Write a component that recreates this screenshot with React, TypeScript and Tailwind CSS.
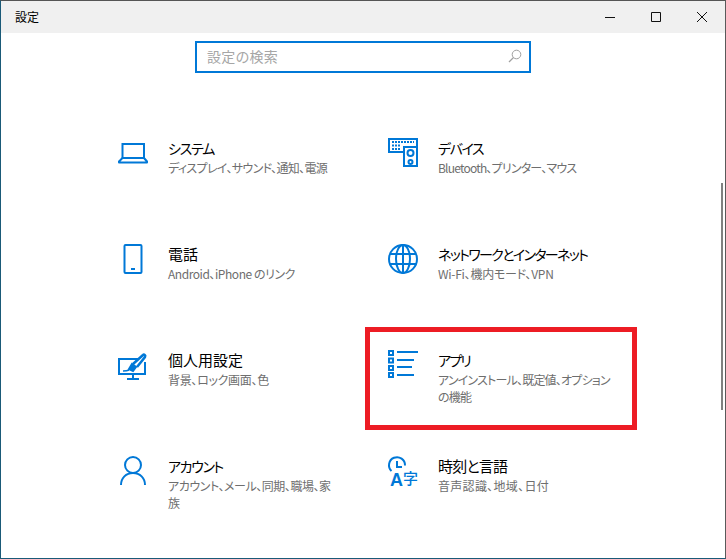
import type { ReactNode } from "react"

const blue = "#0078d7"

function Icon({ children }: { children: ReactNode }) {
  return (
    <svg width="32" height="32" viewBox="0 0 32 32" fill="none" stroke={blue} strokeWidth="2" className="mt-[5px] shrink-0 overflow-visible">
      {children}
    </svg>
  )
}

function Item({
  icon,
  title,
  desc,
  titleClass,
  descClass,
}: {
  icon: ReactNode
  title: string
  desc: string
  titleClass: string
  descClass: string
}) {
  return (
    <div className="flex h-[106px] gap-[18px] pl-[20px]">
      {icon}
      <div className="w-[172px] pt-[2px]">
        <div className={`leading-[22px] text-black ${titleClass}`}>{title}</div>
        <div className={`text-[12px] leading-[17px] text-[#6e6e6e] ${descClass}`}>{desc}</div>
      </div>
    </div>
  )
}

export default function App() {
  return (
    <div className="relative h-[559px] w-[726px] overflow-hidden border border-[#1a5a78] border-r-[#5a5a5a] border-t-[#555555] bg-white [font-family:'Noto_Sans_CJK_JP','Noto_Sans',sans-serif] [font-feature-settings:'palt']">
      <div className="absolute -left-px -top-px h-px w-[438px] bg-[#1c4560]" />
      <div className="absolute -right-px bottom-0 h-[290px] w-px bg-[#1d5878]" />

      <div className="flex h-[32px] items-center justify-between bg-[#f0f0f0]">
        <span className="pl-[14px] text-[12px] text-black">設定</span>
        <div className="flex">
          <div className="flex h-[32px] w-[46px] items-center justify-center">
            <svg width="10" height="10" viewBox="0 0 10 10" stroke="#111" fill="none">
              <path d="M0 5.500h10" />
            </svg>
          </div>
          <div className="flex h-[32px] w-[46px] items-center justify-center">
            <svg width="10" height="10" viewBox="0 0 10 10" stroke="#111" fill="none">
              <path d="M.5.500h9v9h-9z" />
            </svg>
          </div>
          <div className="flex h-[32px] w-[46px] items-center justify-center">
            <svg width="10" height="10" viewBox="0 0 10 10" stroke="#111" fill="none">
              <path d="M0 0l10 10M10 0L0 10" />
            </svg>
          </div>
        </div>
      </div>

      <div className="flex justify-center pt-[8px]">
        <div className="flex h-[32px] w-[336px] items-center justify-between border-2 border-[#0078d7] pl-[10px] pr-[7px]">
          <span className="-mt-[2px] text-[14px] tracking-[0.3px] text-[#a6a6a6]">設定の検索</span>
          <svg width="14" height="14" viewBox="0 0 14 14" fill="none" stroke="#a0a0a0" className="-mt-[2px]">
            <circle cx="8.500" cy="5.500" r="4.300" />
            <path d="M5.500 8.500L1 13" strokeWidth="1.300" />
          </svg>
        </div>
      </div>

      <div className="ml-[97px] mt-[62px] grid w-[540px] grid-cols-2">
        <Item
          title="システム"
          titleClass="text-[14px] tracking-[-1.2px]"
          desc="ディスプレイ、サウンド、通知、電源"
          descClass="tracking-[-0.65px]"
          icon={
            <Icon>
              <path d="M4.500 18V4H26v14" />
              <path d="M4.500 18H26l3 3.500v1H1v-1z" strokeLinejoin="round" />
            </Icon>
          }
        />
        <Item
          title="デバイス"
          titleClass="text-[14px] tracking-[-1.400px]"
          desc="Bluetooth、プリンター、マウス"
          descClass="tracking-[-0.8px]"
          icon={
            <Icon>
              <path d="M15 12H1V-1h28v8" />
              <rect x="16" y="7" width="13" height="19" />
              <circle cx="22.500" cy="13" r="3" />
              <circle cx="22.500" cy="22" r="2" />
              <path d="M4 2h22M4 5.500h9M4 9h9" strokeDasharray="2 1" />
            </Icon>
          }
        />
        <Item
          title="電話"
          titleClass="text-[15px]"
          desc="Android、iPhone のリンク"
          descClass="tracking-[-0.45px]"
          icon={
            <Icon>
              <rect x="6.500" y="-1" width="17" height="28" rx="1" />
              <path d="M13 23h4" />
            </Icon>
          }
        />
        <Item
          title="ネットワークとインターネット"
          titleClass="text-[14px] tracking-[-1.650px]"
          desc="Wi-Fi、機内モード、VPN"
          descClass="tracking-[-0.25px]"
          icon={
            <Icon>
              <circle cx="15" cy="13" r="14" />
              <ellipse cx="15" cy="13" rx="7" ry="14" />
              <path d="M15 -1v28M2 8h26M2 18h26" />
            </Icon>
          }
        />
        <Item
          title="個人用設定"
          titleClass="text-[15px]"
          desc="背景、ロック画面、色"
          descClass="tracking-[-0.3px]"
          icon={
            <Icon>
              <path d="M21 7H1v15h26v-12" />
              <path d="M15 22v4M9 27h12" />
              <path d="M5 19c3 0 4 0 6-1" strokeWidth="1.500" />
              <path d="M11 17l3-5 4 3-3 4z" fill={blue} />
              <path d="M15 12l10-9c1-1 3 0 2 2l-8 10" strokeWidth="2.500" />
            </Icon>
          }
        />
        <Item
          title="アプリ"
          titleClass="text-[14px] tracking-[-1.800px]"
          desc="アンインストール、既定値、オプションの機能"
          descClass="tracking-[-0.8px]"
          icon={
            <Icon>
              <path d="M0 -2h6v6H0zM0 5.500h6v6H0zM0 13h6v6H0zM0 20h6v6H0z" fill={blue} stroke="none" />
              <path d="M2 0h2v2H2zM2 7.500h2v2H2zM2 15h2v2H2zM2 22h2v2H2z" fill="#fff" stroke="none" />
              <path d="M9 0h21M9 8h17M9 15h15M9 23h17" />
            </Icon>
          }
        />
        <Item
          title="アカウント"
          titleClass="text-[14px] tracking-[-1.400px]"
          desc="アカウント、メール、同期、職場、家族"
          descClass="tracking-[-0.45px]"
          icon={
            <Icon>
              <circle cx="15" cy="7" r="8" />
              <path d="M3 27c0-7 5-12 12-12s12 5 12 12" />
            </Icon>
          }
        />
        <Item
          title="時刻と言語"
          titleClass="text-[15px] tracking-[-0.8px]"
          desc="音声認識、地域、日付"
          descClass="tracking-[0.3px]"
          icon={
            <Icon>
              <path d="M3.500 13A8 8 0 1 1 17 7.500" />
              <path d="M9 3v6h5" />
              <text x="2" y="28" fontSize="18" fontWeight="700" fill={blue} stroke="none" fontFamily="Liberation Sans">A</text>
              <text x="15" y="26" fontSize="15" fontWeight="500" fill={blue} stroke="none">字</text>
            </Icon>
          }
        />
      </div>

      <div className="absolute left-[364px] top-[326px] h-[103px] w-[272px] border-[5px] border-[#ed1c24]" />
      <div className="absolute right-[2px] top-[182px] h-[227px] w-[2px] bg-[#808080]" />
    </div>
  )
}
